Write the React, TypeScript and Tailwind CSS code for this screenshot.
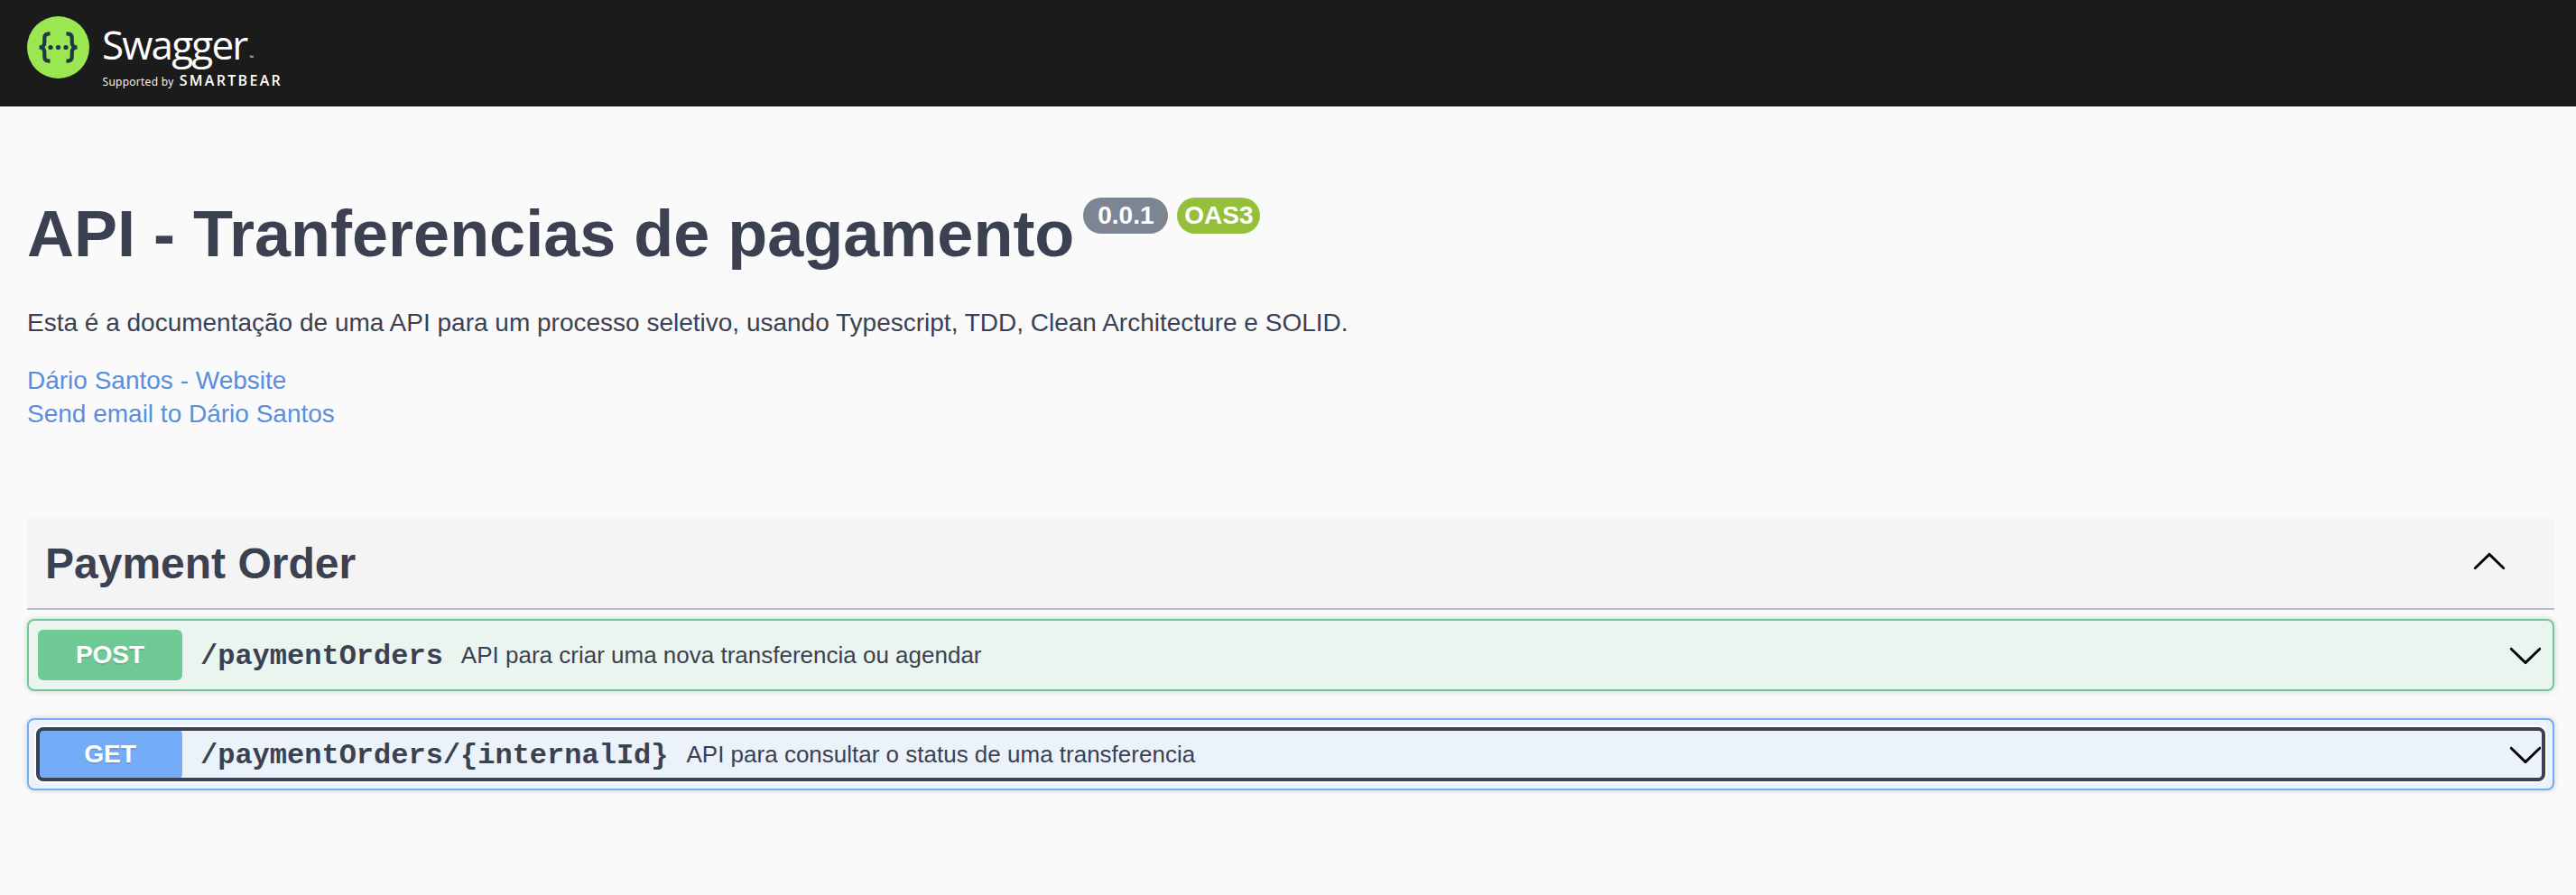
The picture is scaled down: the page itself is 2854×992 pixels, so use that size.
import React from "react";

function Chevron({ up = false }: { up?: boolean }) {
  return (
    <svg
      width="40"
      height="40"
      viewBox="0 0 20 20"
      className={up ? "shrink-0 rotate-180" : "shrink-0"}
      fill="currentColor"
    >
      <path d="M17.418 6.109c.272-.268.709-.268.979 0s.271.701 0 .969l-7.908 7.83c-.27.268-.707.268-.979 0l-7.908-7.83c-.27-.268-.27-.701 0-.969.271-.268.709-.268.979 0L10 13.25l7.418-7.141z" />
    </svg>
  );
}

function SwaggerMark() {
  return (
    <svg width="69" height="69" viewBox="0 0 69 69" className="shrink-0">
      <circle cx="34.5" cy="34.5" r="34.5" fill="#9be752" />
      <g fill="none" stroke="#1d3a44" strokeWidth="4.2">
        <path d="M25.500 19.300h-1.300c-3.200 0-4.900 1.600-4.900 4.600v5c0 3.400-1.800 5.600-5.800 5.600 4 0 5.800 2.200 5.800 5.600v5c0 3 1.700 4.600 4.900 4.600h1.300" />
        <path d="M43.500 19.300h1.300c3.200 0 4.900 1.600 4.900 4.600v5c0 3.400 1.800 5.600 5.800 5.600-4 0-5.800 2.200-5.800 5.600v5c0 3-1.700 4.600-4.900 4.600h-1.300" />
      </g>
      <g fill="#1d3a44">
        <circle cx="26" cy="34.500" r="2.600" />
        <circle cx="34.500" cy="34.500" r="2.600" />
        <circle cx="43" cy="34.500" r="2.600" />
      </g>
    </svg>
  );
}

function Logo() {
  return (
    <div className="flex">
      <SwaggerMark />
      <div className="ml-[14px] mt-[6px] font-['Open_Sans',sans-serif] text-white">
        <div className="flex h-[54px] items-baseline whitespace-nowrap leading-[50px]">
          <span className="text-[44px] tracking-[-1.8px]">Swagger</span>
          <span className="ml-[3px] text-[6px]">™</span>
        </div>
        <div className="flex items-baseline whitespace-nowrap leading-[22px]">
          <span className="ml-[0.500px] text-[12px] tracking-[0.3px]">Supported by</span>
          <span className="ml-[6px] text-[16px] font-semibold tracking-[2.300px]">SMARTBEAR</span>
        </div>
      </div>
    </div>
  );
}

type Operation = {
  method: string;
  path: string;
  summary: string;
  frame: string;
  button: string;
  focused?: boolean;
};

const operations: Operation[] = [
  {
    method: "POST",
    path: "/paymentOrders",
    summary: "API para criar uma nova transferencia ou agendar",
    frame: "border-[#6fc995] bg-[#eaf5ef]",
    button: "bg-[#6fc995]",
  },
  {
    method: "GET",
    path: "/paymentOrders/{internalId}",
    summary: "API para consultar o status de uma transferencia",
    frame: "border-[#74acf8] bg-[#ebf2fa]",
    button: "bg-[#74acf8]",
    focused: true,
  },
];

function OperationRow({ op }: { op: Operation }) {
  return (
    <div
      className={`relative flex h-20 items-center rounded-[8px] border-2 px-[10px] shadow-[0_0_6px_rgba(0,0,0,0.19)] ${op.frame}`}
    >
      <span
        className={`flex h-14 w-40 shrink-0 items-center justify-center rounded-[6px] text-[28px] font-bold text-white [text-shadow:0_2px_0_rgba(0,0,0,0.1)] ${op.button}`}
      >
        {op.method}
      </span>
      <span className="ml-5 pt-1 font-['Liberation_Mono',monospace] text-[32px] font-bold">{op.path}</span>
      <span className="ml-5 flex-1 text-[26px]">{op.summary}</span>
      <span className="text-black">
        <Chevron />
      </span>
      {op.focused && (
        <span className="absolute inset-[8px] rounded-[8px] border-4 border-[#3b4151] shadow-[0_0_0_2px_#fff]" />
      )}
    </div>
  );
}

export default function App() {
  return (
    <div className="min-h-[992px] bg-[#fafafa] font-['Liberation_Sans',sans-serif] text-[#3b4151]">
      <header className="h-[118px] bg-[#1b1b1b] pl-[30px] pt-[18px]">
        <Logo />
      </header>
      <main className="pl-[30px] pr-[24px]">
        <section className="h-[457px] pt-[100px]">
          <div className="flex items-start">
            <h1 className="whitespace-nowrap text-[72px] font-bold leading-[82px]">
              API - Tranferencias de pagamento
            </h1>
            <span className="ml-[10px] mt-[1px] flex h-10 w-[94px] items-center justify-center rounded-full bg-[#7d8492] text-[28px] font-bold text-white">
              0.0.1
            </span>
            <span className="ml-[10px] mt-[1px] flex h-10 w-[92px] items-center justify-center rounded-full bg-[#93bf3b] text-[28px] font-bold text-white">
              OAS3
            </span>
          </div>
          <p className="mt-[39px] text-[28px] leading-[38px]">
            Esta é a documentação de uma API para um processo seletivo, usando Typescript, TDD, Clean Architecture e
            SOLID.
          </p>
          <div className="mt-[26px] flex flex-col items-start text-[28px] leading-[37px] text-[#5a8edc]">
            <a>Dário Santos - Website</a>
            <a>Send email to Dário Santos</a>
          </div>
        </section>
        <section>
          <div className="flex h-[101px] items-center justify-between border-b-2 border-[#bbbcc4] bg-[#f4f4f4] pl-5 pr-[52px]">
            <h2 className="text-[48px] font-bold">Payment Order</h2>
            <span className="pb-[3px] text-black">
              <Chevron up />
            </span>
          </div>
          <div className="mt-[10px] flex flex-col gap-[30px]">
            {operations.map((op) => (
              <OperationRow key={op.path} op={op} />
            ))}
          </div>
        </section>
      </main>
    </div>
  );
}
